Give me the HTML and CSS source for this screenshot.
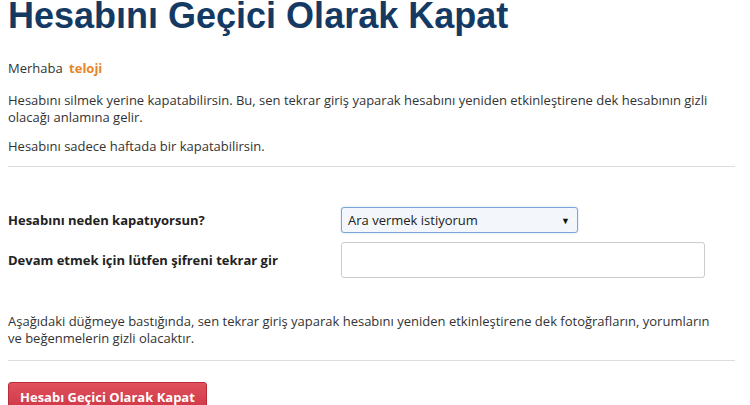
FILE: index.html
```html
<!DOCTYPE html>
<html lang="tr">
<head>
<meta charset="utf-8">
<link rel="stylesheet" href="styles.css">
</head>
<body>
<div class="page">
  <h1 class="title">Hesabını Geçici Olarak Kapat</h1>
  <p class="greet">Merhaba <span class="user">teloji</span></p>
  <p class="text">Hesabını silmek yerine kapatabilirsin. Bu, sen tekrar giriş yaparak hesabını yeniden etkinleştirene dek hesabının gizli olacağı anlamına gelir.</p>
  <p class="text">Hesabını sadece haftada bir kapatabilirsin.</p>
  <hr class="rule">
  <div class="form">
    <div class="row">
      <label class="label">Hesabını neden kapatıyorsun?</label>
      <div class="select"><span>Ara vermek istiyorum</span><span class="caret">▼</span></div>
    </div>
    <div class="row">
      <label class="label">Devam etmek için lütfen şifreni tekrar gir</label>
      <div class="input"></div>
    </div>
  </div>
  <p class="text note">Aşağıdaki düğmeye bastığında, sen tekrar giriş yaparak hesabını yeniden etkinleştirene dek fotoğrafların, yorumların ve beğenmelerin gizli olacaktır.</p>
  <hr class="rule rule2">
  <button class="btn">Hesabı Geçici Olarak Kapat</button>
</div>
</body>
</html>
```
FILE: styles.css
```css
html, body { margin: 0; padding: 0; background: #fff; }
body { font-family: "Open Sans", "Noto Sans", sans-serif; font-size: 13px; color: #333; }
.page { padding: 0 15px 0 8px; width: 727px; }
.title { font-family: "Liberation Sans", Arial, sans-serif; font-weight: bold; font-size: 36px; line-height: 30px; color: #143a64; margin: 0; padding-top: 1px; height: 30px; white-space: nowrap; }
.greet { margin: 28px 0 0; line-height: 18px; }
.user { color: #e8852b; font-weight: bold; margin-left: 3px; }
.text { margin: 12px 0 0; line-height: 17px; }
.greet + .text { margin-top: 15px; }
.rule { border: 0; border-top: 1px solid #ddd; margin: 11px 0 0; }
.form { margin-top: 40px; display: flex; flex-direction: column; gap: 9px; }
.row { display: flex; align-items: center; }
.label { width: 333px; font-weight: bold; color: #222; font-size: 13px; }
.select { width: 222px; height: 24px; border: 1px solid #7aa7d8; border-radius: 3px; background: #f3f7fb; display: flex; align-items: center; justify-content: space-between; padding: 0 7px 0 6px; box-sizing: content-box; color: #222; box-shadow: 0 0 2px rgba(100,150,220,.4); }
.caret { font-size: 9px; color: #111; }
.input { width: 362px; height: 34px; border: 1px solid #ccc; border-radius: 3px; background: #fff; }
.note { margin-top: 35px; max-width: 718px; }
.rule2 { margin-top: 13px; }
.btn { margin-top: 21px; font-family: "Open Sans", sans-serif; font-weight: bold; font-size: 13px; color: #fff; background: linear-gradient(#e0505d, #cc3342); border: 1px solid #b82c3a; border-radius: 3px; padding: 5px 11px 8px; }
```
